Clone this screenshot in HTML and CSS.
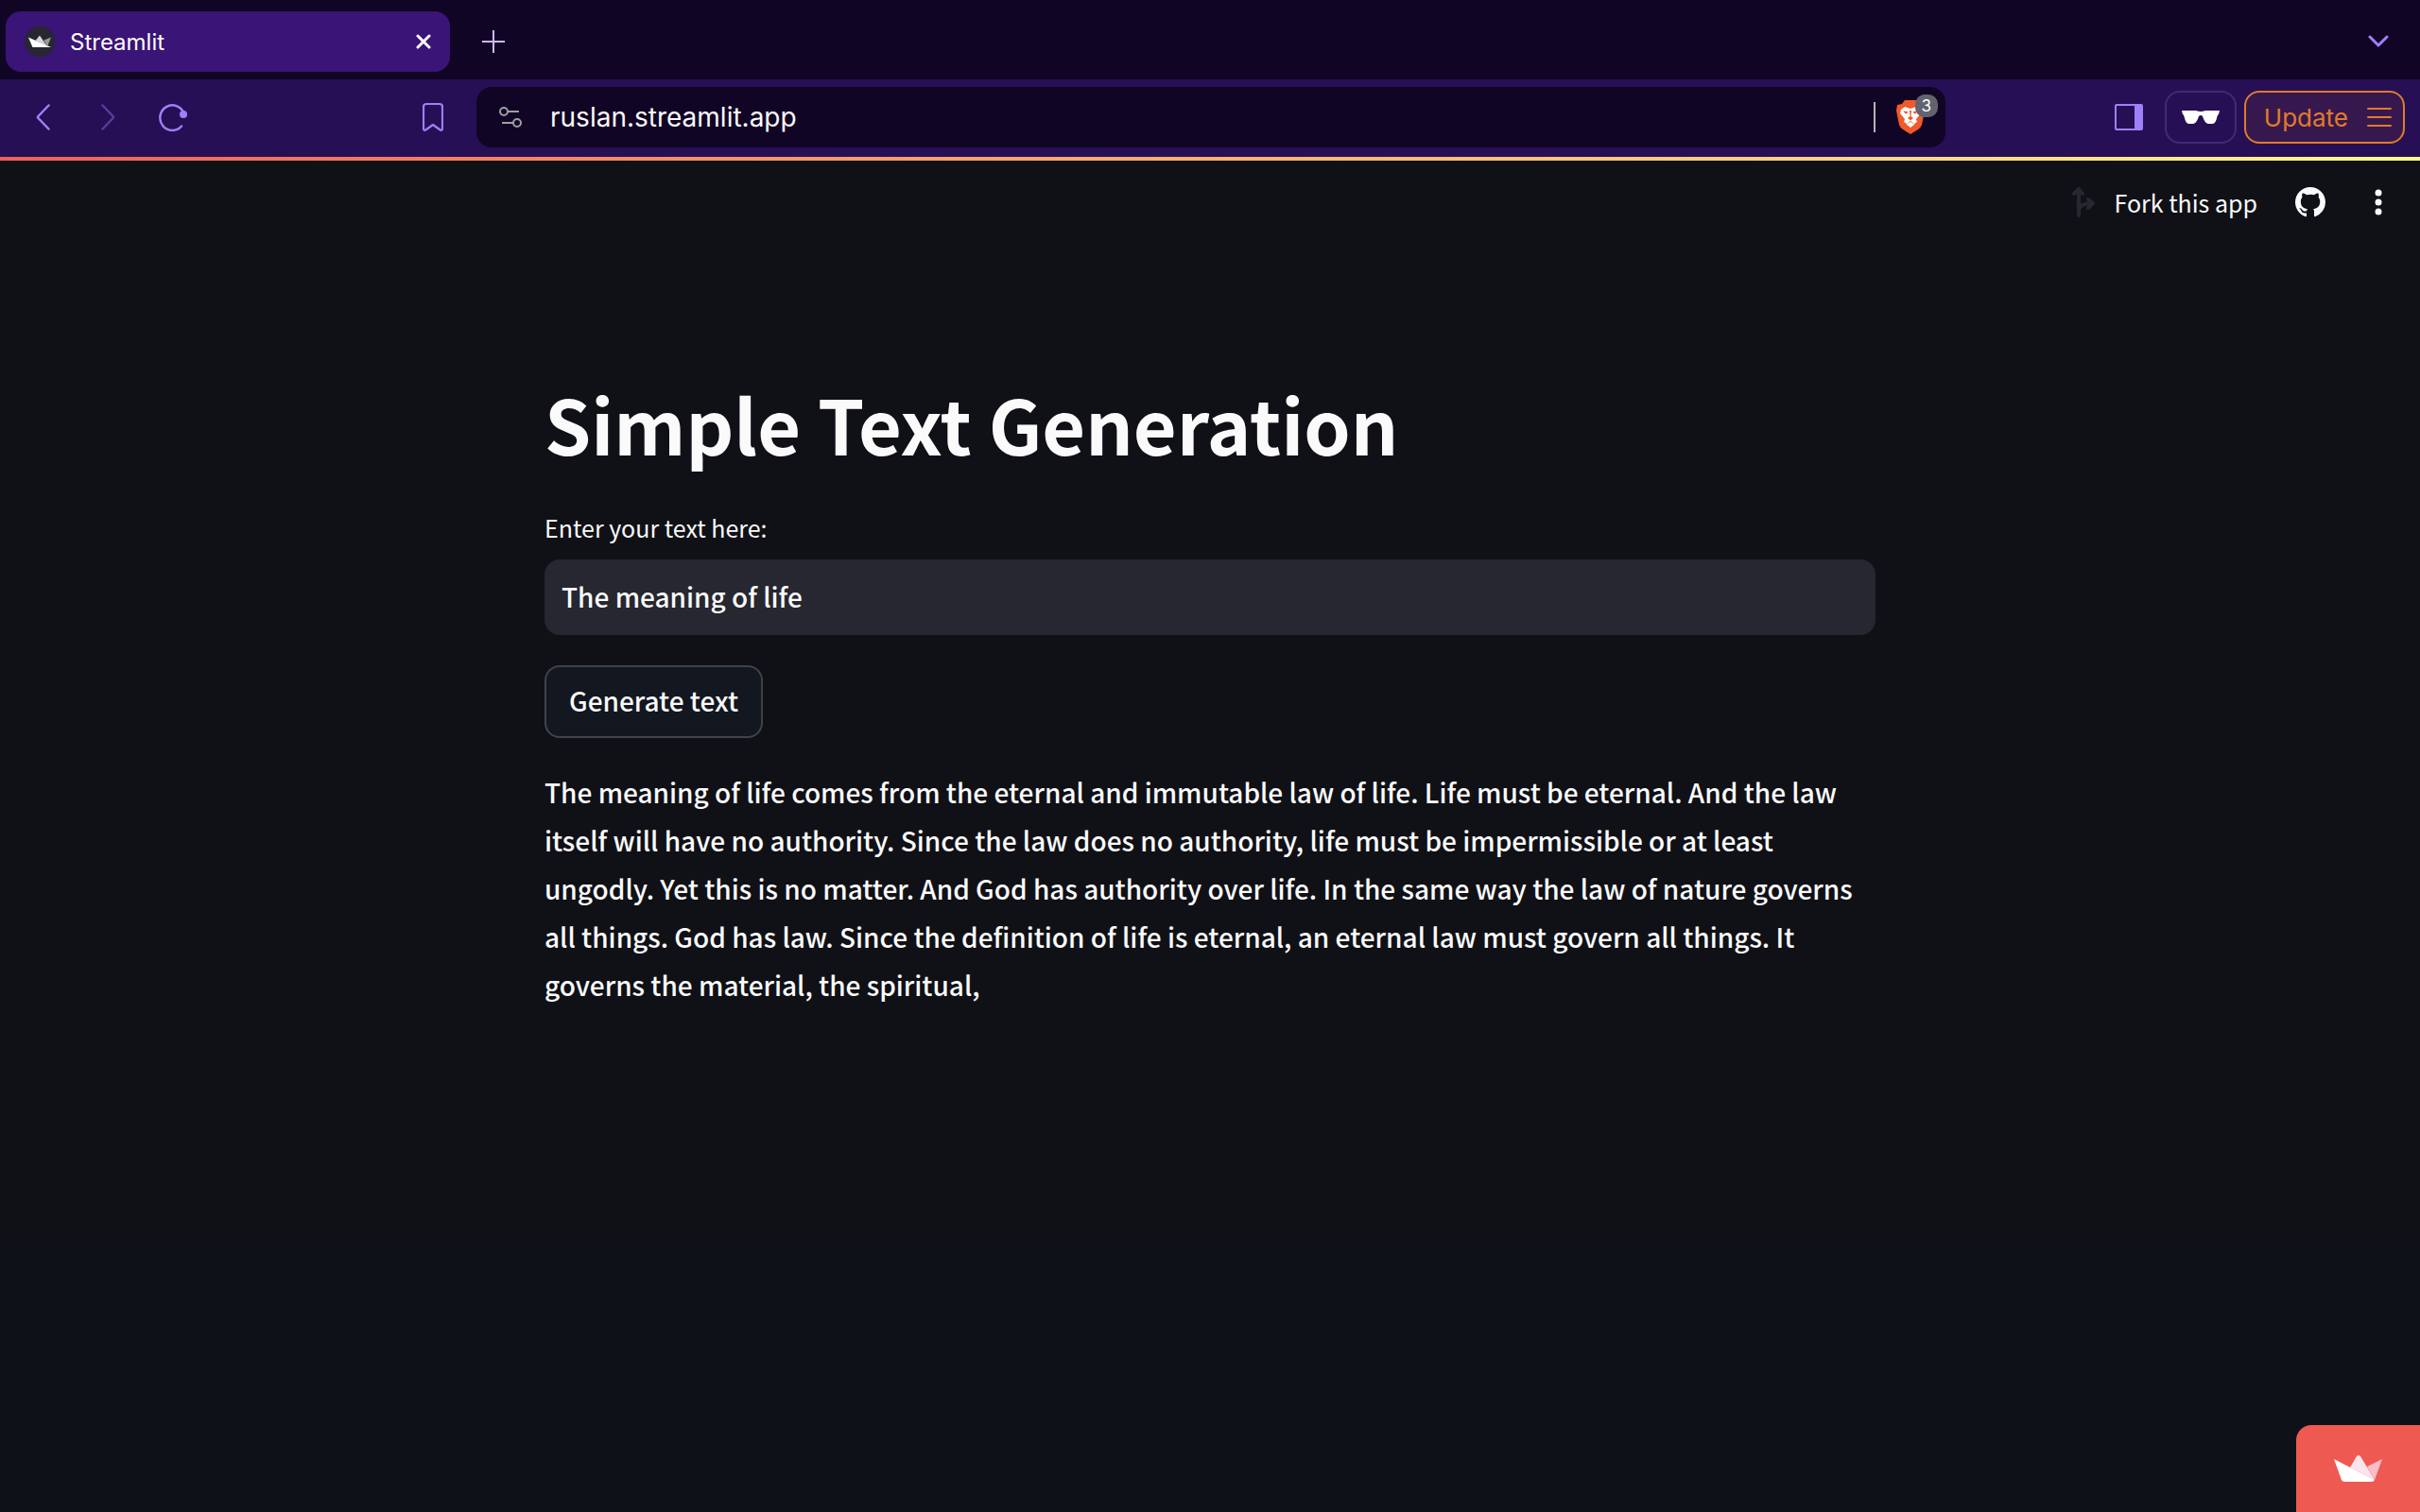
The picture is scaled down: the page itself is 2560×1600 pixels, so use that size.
FILE: index.html
```html
<!DOCTYPE html>
<html lang="en">
<head>
<meta charset="utf-8">
<title>Streamlit</title>
<link rel="stylesheet" href="styles.css">
</head>
<body>
<div class="window">
  <header class="chrome">
    <div class="tabs">
      <div class="tab">
        <svg class="favicon" width="32" height="32" viewBox="0 0 32 32"><circle cx="16" cy="16" r="16" fill="#262730"/><path d="M4 11.500l24 10.500H9q-1 0-1-1z" fill="#fff"/><path d="M11.500 15l4.500-5.500 7.500 11z" fill="#d6d6d6"/><path d="M20.500 14.500l7.500-3-4 10z" fill="#9a9a9a"/></svg>
        <span class="tab-title">Streamlit</span>
        <button class="icon-btn" aria-label="Close tab"><svg width="16" height="16" viewBox="0 0 16 16" fill="none" stroke="#fff" stroke-width="3" stroke-linecap="round"><path d="M2 2l12 12M14 2L2 14"/></svg></button>
      </div>
      <button class="icon-btn" aria-label="New tab"><svg width="24" height="24" viewBox="0 0 24 24" fill="none" stroke="#cbb9fb" stroke-width="2"><path d="M12 0v24M0 12h24"/></svg></button>
      <button class="icon-btn tab-search" aria-label="Search tabs"><svg width="22" height="14" viewBox="0 0 22 14" fill="none" stroke="#a07ffa" stroke-width="3" stroke-linecap="round" stroke-linejoin="round"><path d="M2 2l9 9 9-9"/></svg></button>
    </div>
    <div class="toolbar">
      <nav class="nav">
        <button class="icon-btn" aria-label="Back"><svg width="28" height="28" viewBox="0 0 28 28" fill="none" stroke="#a07ffa" stroke-width="2.500" stroke-linecap="round" stroke-linejoin="round"><path d="M19.500 1.500L8.500 13q-1 1 0 2l11 11.500"/></svg></button>
        <button class="icon-btn" aria-label="Forward"><svg width="28" height="28" viewBox="0 0 28 28" fill="none" stroke="#593b9d" stroke-width="2.500" stroke-linecap="round" stroke-linejoin="round"><path d="M8.500 1.500L19.500 13q1 1 0 2l-11 11.500"/></svg></button>
        <button class="icon-btn" aria-label="Reload"><svg width="30" height="30" viewBox="0 0 30 30" fill="none" stroke="#a07ffa" stroke-width="2.500" stroke-linecap="round"><path d="M26.500 11A13 13.300 0 1 0 24 24.500"/><circle cx="26" cy="12" r="4" fill="#a07ffa" stroke="none"/></svg></button>
      </nav>
      <button class="icon-btn" aria-label="Bookmark"><svg width="22" height="32" viewBox="0 0 22 32" fill="none" stroke="#a07ffa" stroke-width="2.200" stroke-linejoin="round"><path d="M4 2h14q3 0 3 3v23q0 3-3 1l-7-5-7 5q-3 2-3-1V5q0-3 3-3z"/></svg></button>
      <div class="address">
        <svg width="24" height="24" viewBox="0 0 24 24" fill="none" stroke="#9aa0a0" stroke-width="2"><circle cx="5" cy="6" r="4"/><path d="M9 6h12M3 18h12"/><circle cx="19" cy="18" r="4"/></svg>
        <input class="url" type="text" value="ruslan.streamlit.app" aria-label="Address">
        <span class="divider"></span>
        <button class="icon-btn shields" aria-label="Shields">
          <svg width="30" height="36" viewBox="0 0 30 36"><path d="M9 0h12l3 3 4 1 2 7-3 15q-1 3-4 5l-8 5-8-5q-3-2-4-5L0 11l1-6 5-1z" fill="#f15a29"/><path d="M5 10l4-3 6 2 6-2 4 3 1 4-5 6 1 3-3 2-4-3-4 3-3-2 1-3-5-6z" fill="#fff"/><path d="M7 11.500l5 .5-.5 2-1.500.500zM23 11.500l-5 .5.5 2 1.500.500zM14 11h2l-.5 6 2.500 2-3 2.500-3-2.500 2.500-2z" fill="#f15a29"/><path d="M15 23l4.500 2.500L15 29l-4.500-3.500z" fill="#fff"/></svg>
          <span class="badge">3</span>
        </button>
      </div>
      <div class="actions">
        <button class="icon-btn panel" aria-label="Sidebar"><svg width="30" height="28" viewBox="0 0 30 28"><rect x="1" y="1" width="28" height="26" rx="1" fill="none" stroke="#a07ffa" stroke-width="2"/><path d="M21 1h8v26h-8z" fill="#a07ffa"/></svg></button>
        <button class="pill" aria-label="Private profile"><svg width="40" height="14" viewBox="0 0 40 14" fill="#fff"><path d="M0 0q9-1 15 0 5 2 10 0 6-1 15 0l-1 4q-1 0-2 4-1 5-4 6h-5q-4-1-6-8-2-2-4 0-2 7-6 8H7q-3-1-4-6-1-4-2-4z"/></svg></button>
        <button class="pill update">Update<svg width="26" height="20" viewBox="0 0 26 20" stroke="#e07b2d" stroke-width="2" stroke-linecap="round"><path d="M1 1h24M1 10h24M1 19h24"/></svg></button>
      </div>
    </div>
  </header>
  <div class="page">
    <div class="decoration"></div>
    <div class="app-bar">
      <button class="icon-btn fork"><svg width="24" height="32" viewBox="0 0 24 32" fill="none" stroke="#262730" stroke-width="4" stroke-linecap="round" stroke-linejoin="round"><path d="M7 30V3M2 7l5-5 4 5M7 24q2-7 14-7M17 13l5 4-5 5"/></svg>Fork this app</button>
      <a class="github" href="#" aria-label="GitHub"><svg width="32" height="32" viewBox="0 0 16 16" fill="#fafafa"><path d="M8 0C3.58 0 0 3.58 0 8c0 3.54 2.29 6.53 5.47 7.59.4.07.55-.17.55-.38 0-.19-.01-.82-.01-1.49-2.01.37-2.53-.49-2.69-.94-.09-.23-.48-.94-.82-1.13-.28-.15-.68-.52-.01-.53.63-.01 1.08.58 1.23.82.72 1.21 1.87.87 2.33.66.07-.52.28-.87.51-1.07-1.78-.2-3.64-.89-3.64-3.95 0-.87.31-1.59.82-2.15-.08-.2-.36-1.02.08-2.12 0 0 .67-.21 2.2.82.64-.18 1.32-.27 2-.27s1.36.09 2 .27c1.53-1.04 2.2-.82 2.2-.82.44 1.1.16 1.92.08 2.12.51.56.82 1.27.82 2.15 0 3.07-1.87 3.75-3.65 3.95.29.25.54.73.54 1.48 0 1.07-.01 1.93-.01 2.2 0 .21.15.46.55.38A8.01 8.01 0 0 0 16 8c0-4.42-3.58-8-8-8z"/></svg></a>
      <button class="icon-btn" aria-label="Main menu"><svg width="8" height="28" viewBox="0 0 8 28" fill="#fafafa"><circle cx="4" cy="4" r="3.500"/><circle cx="4" cy="14" r="3.500"/><circle cx="4" cy="24" r="3.500"/></svg></button>
    </div>
    <main class="content">
      <h1>Simple Text Generation</h1>
      <label for="prompt">Enter your text here:</label>
      <input class="prompt" id="prompt" type="text" value="The meaning of life">
      <button class="generate">Generate text</button>
      <p>The meaning of life comes from the eternal and immutable law of life. Life must be eternal. And the law itself will have no authority. Since the law does no authority, life must be impermissible or at least ungodly. Yet this is no matter. And God has authority over life. In the same way the law of nature governs all things. God has law. Since the definition of life is eternal, an eternal law must govern all things. It governs the material, the spiritual,</p>
    </main>
  </div>
  <a class="hosted" href="#" aria-label="Hosted with Streamlit"><svg width="52" height="28" viewBox="0 0 52 28"><path d="M0 4l43 22q-1 2-3 2H11q-2 0-3-2z" fill="#fff"/><path d="M17 13L24 1q2-2 4 0l15 25z" fill="#fce4ec"/><path d="M35 12l16-8-8 22z" fill="#f8bfc9"/></svg></a>
</div>
</body>
</html>
```
FILE: styles.css
```css
* { box-sizing: border-box; }

body {
  margin: 0;
  background: #0e1118;
  color: #fafafa;
  font-family: "Noto Sans CJK SC", sans-serif;
  font-weight: 500;
}

button, input { font: inherit; color: inherit; }
svg { display: block; flex: none; }

.window {
  min-height: 100vh;
  display: flex;
  flex-direction: column;
}

.chrome {
  font-family: Inter, sans-serif;
  font-weight: 400;
}

.icon-btn {
  display: flex;
  align-items: center;
  padding: 0;
  border: 0;
  background: none;
}

.tabs {
  display: flex;
  align-items: center;
  height: 84px;
  padding: 4px 33px 0 6px;
  background: #110525;
}

.tab {
  display: flex;
  align-items: center;
  width: 470px;
  height: 64px;
  margin-right: 34px;
  padding: 0 20px;
  border-radius: 16px;
  background: #3a1476;
}

.tab-title {
  flex: 1;
  padding-left: 16px;
  font-size: 24px;
}

.tab-search { margin-left: auto; }

.toolbar {
  display: flex;
  align-items: center;
  height: 82px;
  padding: 0 16px 2px 32px;
  background: #270f55;
}

.nav {
  display: flex;
  gap: 40px;
  width: 415px;
}

.address {
  display: flex;
  align-items: center;
  flex: 1;
  height: 64px;
  margin: 0 179px 0 35px;
  padding: 0 22px 0 24px;
  border-radius: 16px;
  background: #110525;
}

.url {
  flex: 1;
  padding: 0 0 0 30px;
  border: 0;
  background: none;
  font-size: 28px;
}

.divider {
  width: 2px;
  height: 32px;
  margin-right: 22px;
  background: #b5b2b8;
}

.shields { position: relative; }

.badge {
  position: absolute;
  top: -6px;
  left: 20px;
  width: 24px;
  height: 24px;
  border-radius: 10px;
  background: #63636f;
  color: #fff;
  font-size: 17px;
  line-height: 24px;
  text-align: center;
}

.actions {
  display: flex;
  align-items: center;
  gap: 8px;
}

.panel { margin-right: 15px; }

.pill {
  display: flex;
  align-items: center;
  height: 56px;
  padding: 0 16px;
  border: 2px solid #432977;
  border-radius: 16px;
  background: none;
}

.update {
  gap: 20px;
  padding: 0 12px 0 19px;
  border-color: #e07b2d;
  background: #37184e;
  color: #e07b2d;
  font-size: 26px;
}

.page {
  flex: 1;
  margin-bottom: 286px;
  background: #101116;
}

.decoration {
  height: 4px;
  background: linear-gradient(90deg, #f05f58, #f9a26b 40%, #fbd984 80%, #fffb8c);
}

.app-bar {
  display: flex;
  align-items: center;
  justify-content: flex-end;
  gap: 40px;
  height: 88px;
  padding: 0 40px;
}

.fork {
  gap: 20px;
  font-size: 25px;
  font-weight: 400;
  line-height: 36px;
}

.github { margin-right: 12px; }

.content {
  display: flex;
  flex-direction: column;
  align-items: flex-start;
  width: 55%;
  margin: 0 auto;
  padding-top: 138px;
}

h1 {
  margin: 0;
  font-size: 79px;
  font-weight: 700;
  line-height: 104px;
}

label {
  margin-top: 36px;
  font-size: 25px;
  font-weight: 400;
  line-height: 44px;
}

.prompt {
  width: 100%;
  height: 80px;
  margin-top: 12px;
  padding: 0 18px 2px;
  border: 0;
  border-radius: 16px;
  background: #262730;
  font-size: 28px;
}

.generate {
  height: 77px;
  margin-top: 32px;
  padding: 0 24px 4px;
  border: 2px solid #41434a;
  border-radius: 16px;
  background: #131720;
  font-size: 28px;
}

p {
  margin: 32px 0 0;
  font-size: 28px;
  line-height: 51px;
}

.hosted {
  position: fixed;
  right: 0;
  bottom: 0;
  display: grid;
  place-items: center;
  width: 131px;
  height: 92px;
  border-radius: 16px 0 0 0;
  background: #ee5a52;
}
```
